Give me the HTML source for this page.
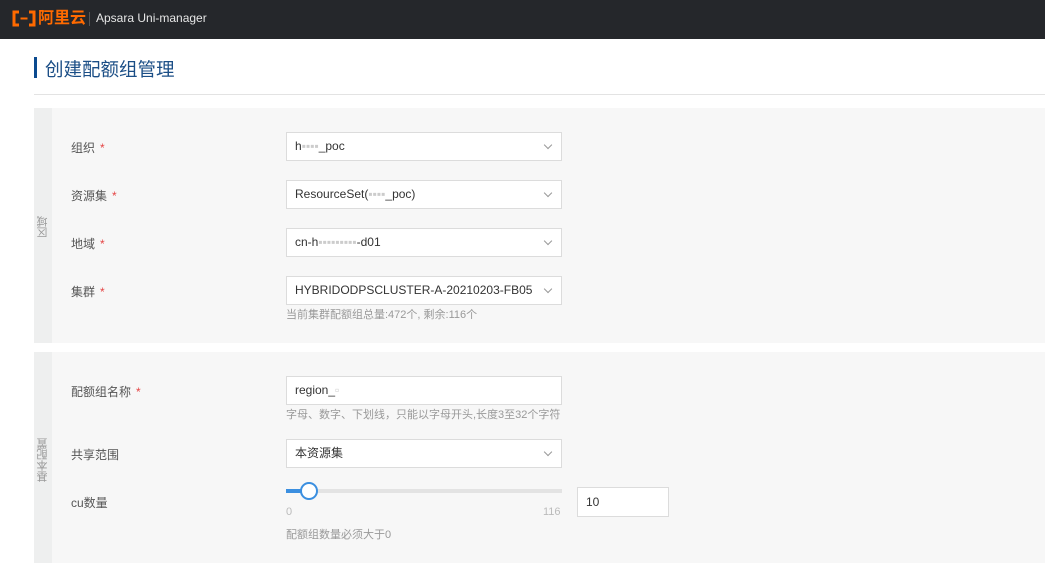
<!DOCTYPE html>
<html><head><meta charset="utf-8"><style>
*{margin:0;padding:0;box-sizing:border-box}
body{width:1045px;height:577px;background:#fff;font-family:"Liberation Sans","Noto Sans CJK SC",sans-serif;position:relative;overflow:hidden;color:#333}
.hdr{position:absolute;left:0;top:0;width:1045px;height:39px;background:#25272b}
.logo{position:absolute;left:11px;top:8px;color:#ff6a00;font-weight:bold;font-size:16px;line-height:22px;white-space:nowrap}
.logo svg{vertical-align:-4px;margin-right:1px}
.sep{position:absolute;left:89px;top:12px;width:1px;height:14px;background:#555}
.app{position:absolute;left:96px;top:11px;color:#e6e6e6;font-size:12px}
.tbar{position:absolute;left:34px;top:57px;width:3px;height:21px;background:#0b4a8f}
.title{position:absolute;left:45px;top:56px;font-size:18.5px;color:#1b4e86}
.line{position:absolute;left:34px;top:94px;right:0;height:1px;background:#e3e3e3}
.sec{position:absolute;left:34px;right:0;background:#f7f7f7}
.strip{position:absolute;left:0;top:0;bottom:0;width:18px;background:#eeefef}
.vt{position:absolute;left:2px;width:14px;font-size:11px;color:#999;writing-mode:vertical-rl;transform:rotate(180deg);line-height:14px}
.lbl{position:absolute;left:71px;font-size:12px;color:#555}
.lbl i{color:#e54545;font-style:normal;margin-left:5px}
.inp{position:absolute;left:286px;width:276px;height:29px;background:#fff;border:1px solid #dcdcdc;font-size:12px;color:#333;padding:0 8px;line-height:27px}
.inp .ar{position:absolute;right:10px;top:9px;width:6px;height:6px;border-right:1px solid #999;border-bottom:1px solid #999;transform:rotate(45deg)}
.hint{position:absolute;left:286px;font-size:11px;color:#999}
.bl{color:#ccc}
</style></head><body>
<div class="hdr">
 <div class="logo"><svg width="26" height="17" viewBox="0 0 26 17"><path d="M8 2H3v13h5M18 2h5v13h-5" fill="none" stroke="#ff6a00" stroke-width="3"/><path d="M9.5 8.5h7" stroke="#ff6a00" stroke-width="2"/></svg>阿里云</div>
 <div class="sep"></div>
 <div class="app">Apsara Uni-manager</div>
</div>
<div class="tbar"></div><div class="title">创建配额组管理</div>
<div class="line"></div>

<div class="sec" style="top:108px;height:235px"><div class="strip"></div><div class="vt" style="top:108px">区域</div></div>
<div class="sec" style="top:352px;height:211px"><div class="strip"></div><div class="vt" style="top:86px">基本配置</div></div>

<div class="lbl" style="top:139px">组织<i>*</i></div>
<div class="inp" style="top:132px">h<span class="bl">▪▪▪▪</span>_poc<span class="ar"></span></div>
<div class="lbl" style="top:187px">资源集<i>*</i></div>
<div class="inp" style="top:180px">ResourceSet(<span class="bl">▪▪▪▪</span>_poc)<span class="ar"></span></div>
<div class="lbl" style="top:235px">地域<i>*</i></div>
<div class="inp" style="top:228px">cn-h<span class="bl">▪▪▪▪▪▪▪▪▪</span>-d01<span class="ar"></span></div>
<div class="lbl" style="top:283px">集群<i>*</i></div>
<div class="inp" style="top:276px">HYBRIDODPSCLUSTER-A-20210203-FB05<span class="ar"></span></div>
<div class="hint" style="top:306px">当前集群配额组总量:472个, 剩余:116个</div>

<div class="lbl" style="top:383px">配额组名称<i>*</i></div>
<div class="inp" style="top:376px">region_<span class="bl">▫</span></div>
<div class="hint" style="top:406px">字母、数字、下划线，只能以字母开头,长度3至32个字符</div>
<div class="lbl" style="top:446px">共享范围</div>
<div class="inp" style="top:439px">本资源集<span class="ar"></span></div>
<div class="lbl" style="top:494px">cu数量</div>
<div style="position:absolute;left:286px;top:489px;width:276px;height:4px;background:#e3e3e3"></div>
<div style="position:absolute;left:286px;top:489px;width:24px;height:4px;background:#3b8fe0"></div>
<div style="position:absolute;left:300px;top:482px;width:18px;height:18px;border-radius:50%;background:#fff;border:2px solid #3b8fe0"></div>
<div style="position:absolute;left:286px;top:506px;font-size:11px;color:#bbb">0</div>
<div style="position:absolute;left:543px;top:506px;font-size:11px;color:#bbb">116</div>
<div class="inp" style="left:577px;width:92px;top:487px;height:30px;line-height:28px">10</div>
<div class="hint" style="top:526px">配额组数量必须大于0</div>
</body></html>
